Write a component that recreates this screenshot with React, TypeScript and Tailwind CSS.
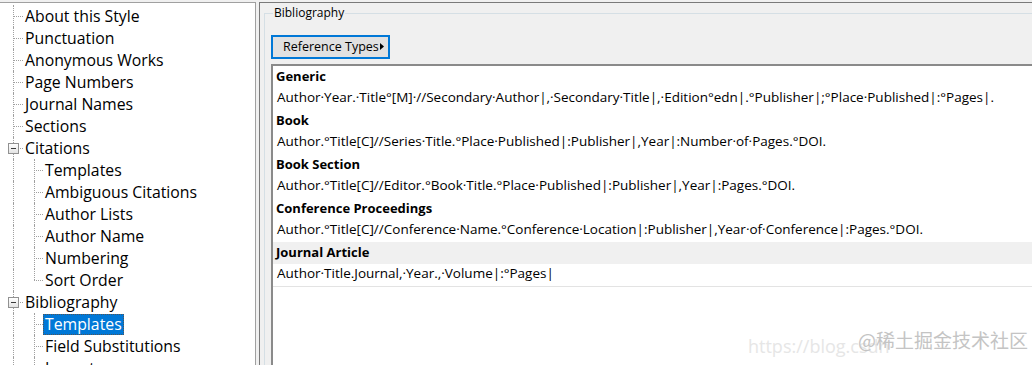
const tree: { label: string; level: number; box?: boolean; selected?: boolean; lastChild?: boolean }[] = [
  { label: "About this Style", level: 1 },
  { label: "Punctuation", level: 1 },
  { label: "Anonymous Works", level: 1 },
  { label: "Page Numbers", level: 1 },
  { label: "Journal Names", level: 1 },
  { label: "Sections", level: 1 },
  { label: "Citations", level: 1, box: true },
  { label: "Templates", level: 2 },
  { label: "Ambiguous Citations", level: 2 },
  { label: "Author Lists", level: 2 },
  { label: "Author Name", level: 2 },
  { label: "Numbering", level: 2 },
  { label: "Sort Order", level: 2, lastChild: true },
  { label: "Bibliography", level: 1, box: true },
  { label: "Templates", level: 2, selected: true },
  { label: "Field Substitutions", level: 2 },
  { label: "Layout", level: 2 },
];

const templates = [
  {
    name: "Generic",
    text: "Author·Year.·Title°[M]·//Secondary·Author|,·Secondary·Title|,·Edition°edn|.°Publisher|;°Place·Published|:°Pages|.",
  },
  {
    name: "Book",
    text: "Author.°Title[C]//Series·Title.°Place·Published|:Publisher|,Year|:Number·of·Pages.°DOI.",
  },
  {
    name: "Book Section",
    text: "Author.°Title[C]//Editor.°Book·Title.°Place·Published|:Publisher|,Year|:Pages.°DOI.",
  },
  {
    name: "Conference Proceedings",
    text: "Author.°Title[C]//Conference·Name.°Conference·Location|:Publisher|,Year·of·Conference|:Pages.°DOI.",
  },
  {
    name: "Journal Article",
    text: "Author·Title.Journal,·Year.,·Volume|:°Pages|",
    active: true,
  },
];

function TreeRow({ item }: { item: (typeof tree)[number] }) {
  return (
    <div className="flex h-[22px] items-stretch">
      {/* root level gutter */}
      <div className="relative w-[23px] shrink-0">
        <div className="absolute left-[13px] top-0 h-full border-l border-dotted border-[#a0a0a0]" />
        {item.level === 1 && (
          <div className="absolute left-[13px] top-[11px] w-[10px] border-t border-dotted border-[#a0a0a0]" />
        )}
        {item.box && (
          <div className="absolute left-[8px] top-[6px] flex h-[11px] w-[11px] items-center justify-center border border-[#919191] bg-gradient-to-b from-white to-[#e4e4e4]">
            <div className="h-px w-[5px] bg-[#3b3b3b]" />
          </div>
        )}
      </div>
      {item.level === 2 && (
        <div className="relative w-[20px] shrink-0">
          <div
            className={
              item.lastChild
                ? "absolute left-[11px] top-0 h-[11px] border-l border-dotted border-[#a0a0a0]"
                : "absolute left-[11px] top-0 h-full border-l border-dotted border-[#a0a0a0]"
            }
          />
          <div className="absolute left-[11px] top-[11px] w-[9px] border-t border-dotted border-[#a0a0a0]" />
        </div>
      )}
      <div className="flex items-center">
        <span
          className={
            item.selected
              ? "border border-dotted border-[#555] bg-[#0078d7] px-[1px] leading-[19px] text-white"
              : "border border-transparent px-[1px] leading-[19px] text-black"
          }
        >
          {item.label}
        </span>
      </div>
    </div>
  );
}

export default function App() {
  return (
    <div className="relative flex h-[365px] w-[1032px] overflow-hidden bg-[#f0f0f0] font-['Open_Sans','Noto_Sans',sans-serif]">
      {/* tree */}
      <div className="mt-[2px] w-[256px] shrink-0 border-r border-t border-[#a0a0a0] bg-white pt-[2px] text-[15.8px]">
        {tree.map((item, i) => (
          <TreeRow key={i} item={item} />
        ))}
      </div>

      <div className="w-[3px] shrink-0" />

      {/* right panel */}
      <div className="mt-[2px] flex-1 border-l border-t border-[#7a7a7a] bg-[#f0f0f0] pl-[4px]">
        <fieldset className="mt-[2px] h-[400px] w-[820px] border border-[#d5dfe5] pl-[6px]">
          <legend className="ml-[2px] px-[1px] text-[12px] leading-[16px] text-black">Bibliography</legend>
          <button className="mt-[14px] flex h-[24px] w-[119px] items-center border-2 border-[#0078d7] bg-[#e1e1e1] pl-[10px] text-[12.5px] text-black">
            <span>Reference Types</span>
            <svg width="5" height="7" viewBox="0 0 5 7" className="ml-[1px] mt-[-2px]">
              <path d="M0 0 L4 3.5 L0 7 Z" fill="#000" />
            </svg>
          </button>
          <div className="mt-[5px] h-[400px] border-l-2 border-t-2 border-[#8a8a8a] bg-white">
            {templates.map((t) => (
              <div key={t.name} className={t.active ? "border-b border-[#e3e3e3]" : ""}>
                <div
                  className={
                    t.active
                      ? "flex h-[22px] items-center bg-[#f0f0f0] pl-[3px] text-[13px] font-bold text-black"
                      : "flex h-[22px] items-center pl-[3px] text-[13px] font-bold text-black"
                  }
                >
                  {t.name}
                </div>
                <div className="flex h-[22px] items-center whitespace-nowrap pb-[4px] pl-[4px] text-[13.5px] text-black">
                  {t.text}
                </div>
              </div>
            ))}
          </div>
        </fieldset>
      </div>

      {/* watermark */}
      <div className="pointer-events-none absolute left-[748px] top-[333px] whitespace-nowrap text-[18px] text-[#e6e6e6]">
        https://blog.csdn
      </div>
      <div className="pointer-events-none absolute left-[858px] top-[326px] whitespace-nowrap font-['Noto_Sans_CJK_SC',sans-serif] text-[19px] text-[#c4c4c4]">
        @稀土掘金技术社区
      </div>
    </div>
  );
}
